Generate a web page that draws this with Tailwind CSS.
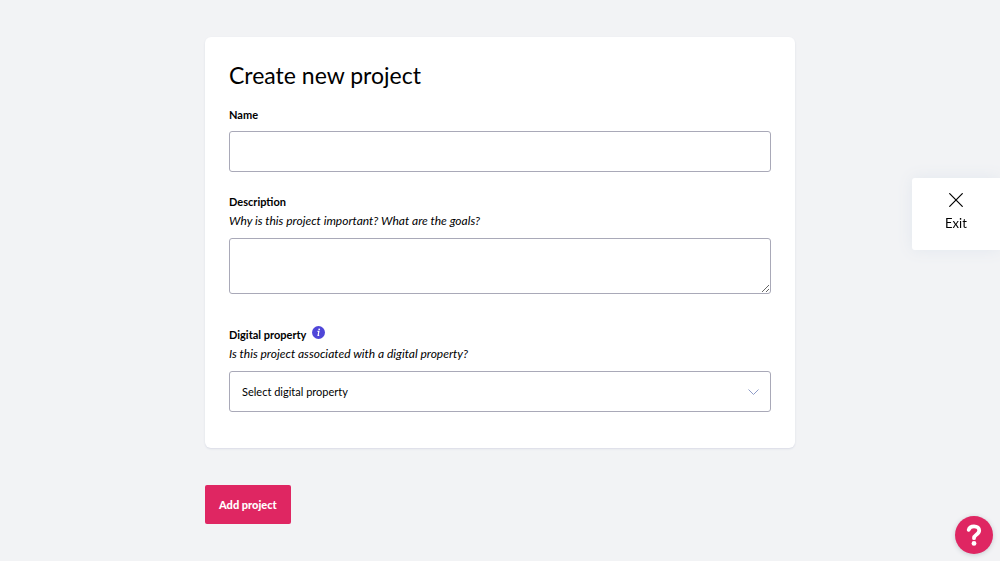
<!DOCTYPE html>
<html lang="en">
<head>
  <meta charset="UTF-8" />
  <meta name="viewport" content="width=device-width, initial-scale=1.0" />
  <title>Create new project</title>
  <script src="https://cdn.jsdelivr.net/npm/@tailwindcss/browser@4"></script>
</head>
<body class="min-h-screen bg-[#f2f3f5] font-['Lato','Open_Sans',sans-serif] text-[11px] leading-4 text-black">
  <main class="mx-auto w-full max-w-[590px] py-[37px]">
    <form>
      <div class="rounded-md bg-white px-6 pt-[22px] pb-9 shadow-[0_1px_2px_#d9dbe5]">
        <h1 class="text-[23px] leading-8">Create new project</h1>

        <div class="mt-4">
          <label for="name" class="block font-bold">Name</label>
          <input id="name" type="text" class="mt-2 block h-[41px] w-full rounded-[3px] border border-[#a9a9b8] px-3 outline-none" />
        </div>

        <div class="mt-[22px]">
          <label for="description" class="block font-bold">Description</label>
          <p class="mt-[3px] text-[12px] leading-4 italic">Why is this project important? What are the goals?</p>
          <textarea id="description" class="mt-[9px] block h-14 w-full rounded-[3px] border border-[#a9a9b8] px-3 py-2 outline-none"></textarea>
        </div>

        <div class="mt-8">
          <div class="flex items-end gap-1.5">
            <label for="property" class="font-bold">Digital property</label>
            <button type="button" aria-label="More information" class="mb-1">
              <svg class="size-[13px]" viewBox="0 0 13 13">
                <circle cx="6.5" cy="6.5" r="6.5" fill="#4f46d8" />
                <circle cx="7.2" cy="3.3" r="0.9" fill="#fff" />
                <path d="M5.5 5.4h1.4L6.1 9.4h1.1" fill="none" stroke="#fff" stroke-width="1.2" />
              </svg>
            </button>
          </div>
          <p class="mt-[3px] text-[12px] leading-4 italic">Is this project associated with a digital property?</p>
          <div class="relative mt-[9px]">
            <select id="property" class="block h-[41px] w-full appearance-none rounded-[3px] border border-[#a9a9b8] bg-white px-3 outline-none">
              <option>Select digital property</option>
            </select>
            <svg class="pointer-events-none absolute top-1/2 right-3 h-[6px] w-[11px] -translate-y-1/2" viewBox="0 0 11 6" fill="none" stroke="#8f9cc8">
              <path d="M0.5 0.5l5 5l5-5" />
            </svg>
          </div>
        </div>
      </div>

      <button type="submit" class="mt-[37px] h-[39px] rounded-[2px] bg-[#df2662] px-[14px] font-black text-white">Add project</button>
    </form>
  </main>

  <!-- Exit tab on the right edge -->
  <button type="button" class="fixed top-[178px] right-0 flex h-[72px] w-[88px] flex-col items-center rounded-l-[3px] bg-white pt-[15px] text-[13px] shadow-[0_0_16px_#e2e7ee]">
    <svg class="size-[14px]" viewBox="0 0 14 14" fill="none" stroke="#000" stroke-width="1.2" stroke-linecap="round">
      <path d="M0.7 0.7l12.6 12.6M13.3 0.7L0.7 13.3" />
    </svg>
    <span class="mt-2">Exit</span>
  </button>

  <!-- Help -->
  <button type="button" aria-label="Help" class="fixed right-[7px] bottom-[7px] flex size-[38px] items-center justify-center rounded-full bg-[#df2662] shadow-[0_1px_5px_#c5c9cf]">
    <svg class="h-[22px] w-4" viewBox="0 0 16 22" fill="none">
      <path d="M2.7 5.900C3.300 3.500 5.200 2.300 8 2.300c3.200 0 5.200 1.700 5.200 4.200 0 2.300-1.300 3.200-2.900 4.300C8.800 11.800 8 12.600 8 14.200" stroke="#fff" stroke-width="3.800" stroke-linecap="round" />
      <circle cx="8" cy="19.400" r="2.400" fill="#fff" />
    </svg>
  </button>
</body>
</html>
